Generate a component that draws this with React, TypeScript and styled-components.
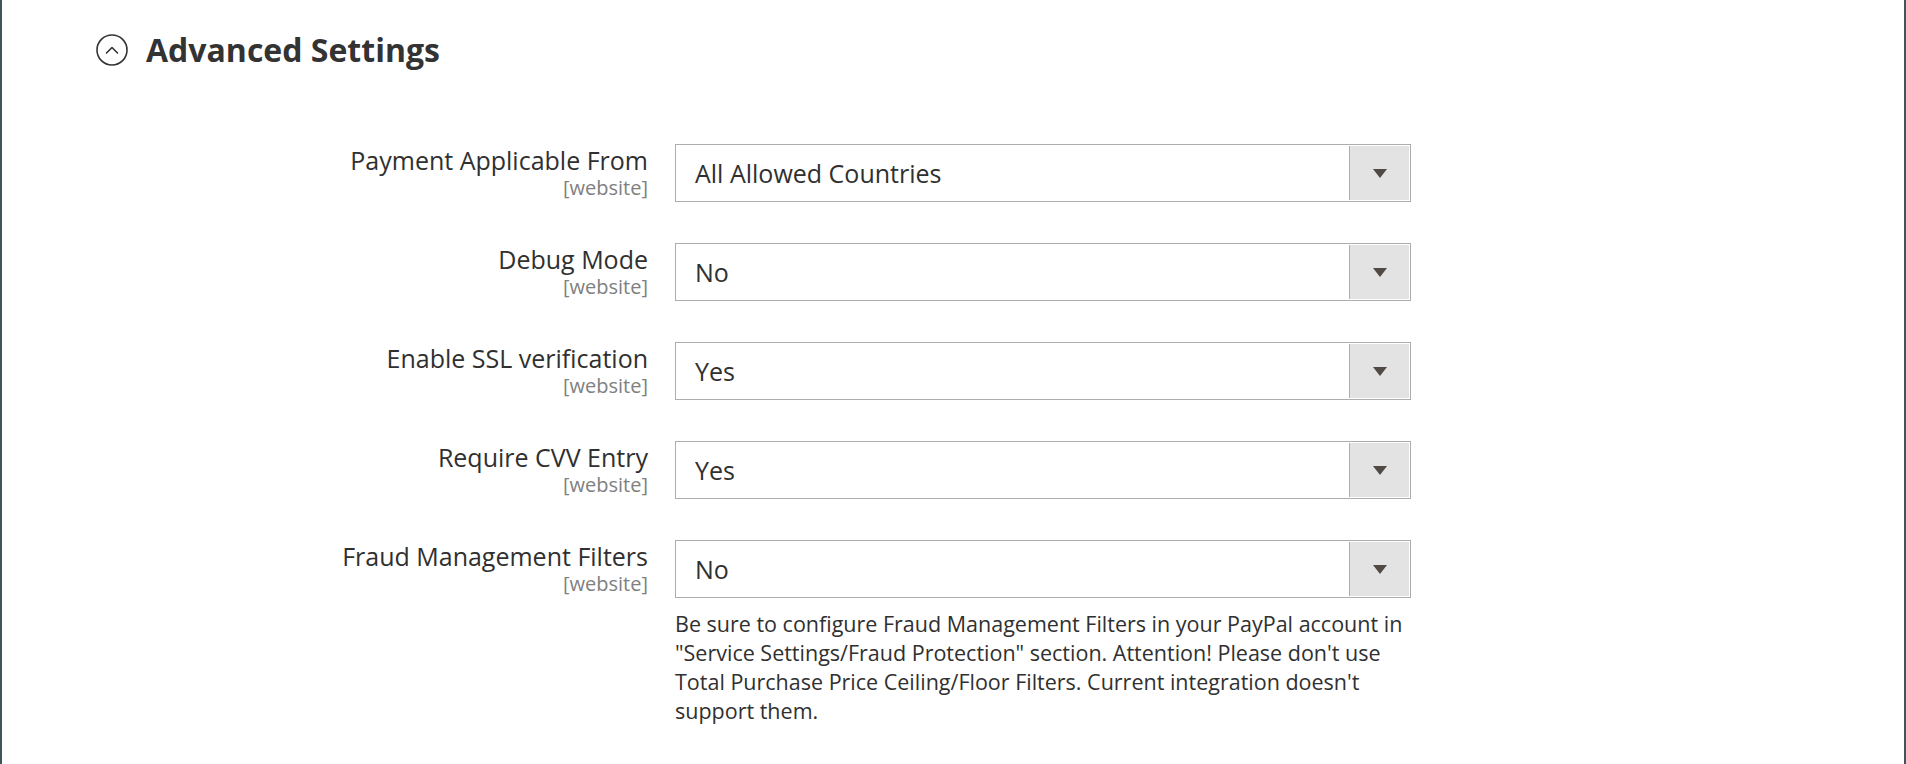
import styled, { createGlobalStyle } from "styled-components"

const GlobalStyle = createGlobalStyle`
  html, body {
    margin: 0;
    padding: 0;
    background: #ffffff;
  }
  body {
    font-family: "Open Sans", "Liberation Sans", sans-serif;
    color: #303030;
  }
`

const Page = styled.div`
  box-sizing: border-box;
  min-height: 100vh;
  border-left: 2px solid #41535b;
  border-right: 2px solid #41535b;
  padding: 31px 0 0 94px;
`

const Header = styled.div`
  display: flex;
  align-items: center;
  gap: 18px;
  height: 38px;
`

const Title = styled.h2`
  margin: 0;
  font-size: 32px;
  font-weight: 700;
  line-height: 38px;
  color: #333333;
`

const Form = styled.div`
  display: flex;
  flex-direction: column;
  gap: 41px;
  margin-top: 75px;
  margin-left: -94px;
`

const Row = styled.div`
  display: grid;
  grid-template-columns: 646px 736px;
  column-gap: 27px;
  align-items: start;
`

const LabelCell = styled.div`
  display: flex;
  flex-direction: column;
  align-items: flex-end;
  text-align: right;
  padding-top: 2px;
`

const Label = styled.span`
  font-size: 25px;
  line-height: 28px;
`

const Scope = styled.span`
  font-size: 20px;
  line-height: 22px;
  margin-top: 3px;
  color: #808080;
`

const Control = styled.div`
  display: flex;
  flex-direction: column;
`

const Select = styled.div`
  box-sizing: border-box;
  height: 58px;
  display: flex;
  align-items: stretch;
  border: 1px solid #adadad;
  background: #ffffff;
  padding: 1px;
`

const Value = styled.span`
  flex: 1;
  display: flex;
  align-items: center;
  padding-left: 18px;
  font-size: 25px;
  color: #303030;
`

const ArrowBox = styled.span`
  box-sizing: border-box;
  width: 60px;
  display: flex;
  align-items: center;
  justify-content: center;
  background: #e3e3e3;
  border-left: 1px solid #adadad;
`

const Arrow = styled.span`
  width: 0;
  height: 0;
  border-left: 7px solid transparent;
  border-right: 7px solid transparent;
  border-top: 9px solid #514943;
`

const Note = styled.p`
  margin: 11px 0 0;
  font-size: 21.5px;
  line-height: 29px;
  color: #303030;
`

const CollapseIcon = () => (
  <svg width="32" height="32" viewBox="0 0 32 32" fill="none">
    <circle cx="16" cy="16" r="15" stroke="#333333" strokeWidth="1.6" />
    <polyline
      points="10.5,19 16,13.5 21.5,19"
      stroke="#333333"
      strokeWidth="1.6"
      strokeLinecap="round"
      strokeLinejoin="round"
    />
  </svg>
)

interface Field {
  label: string
  value: string
  note?: string
}

const fields: Field[] = [
  { label: "Payment Applicable From", value: "All Allowed Countries" },
  { label: "Debug Mode", value: "No" },
  { label: "Enable SSL verification", value: "Yes" },
  { label: "Require CVV Entry", value: "Yes" },
  {
    label: "Fraud Management Filters",
    value: "No",
    note:
      "Be sure to configure Fraud Management Filters in your PayPal account in \"Service Settings/Fraud Protection\" section. Attention! Please don't use Total Purchase Price Ceiling/Floor Filters. Current integration doesn't support them.",
  },
]

const App = () => {
  return (
    <>
      <GlobalStyle />
      <Page>
        <Header>
          <CollapseIcon />
          <Title>Advanced Settings</Title>
        </Header>
        <Form>
          {fields.map((field) => (
            <Row key={field.label}>
              <LabelCell>
                <Label>{field.label}</Label>
                <Scope>[website]</Scope>
              </LabelCell>
              <Control>
                <Select>
                  <Value>{field.value}</Value>
                  <ArrowBox>
                    <Arrow />
                  </ArrowBox>
                </Select>
                {field.note && <Note>{field.note}</Note>}
              </Control>
            </Row>
          ))}
        </Form>
      </Page>
    </>
  )
}

export default App
